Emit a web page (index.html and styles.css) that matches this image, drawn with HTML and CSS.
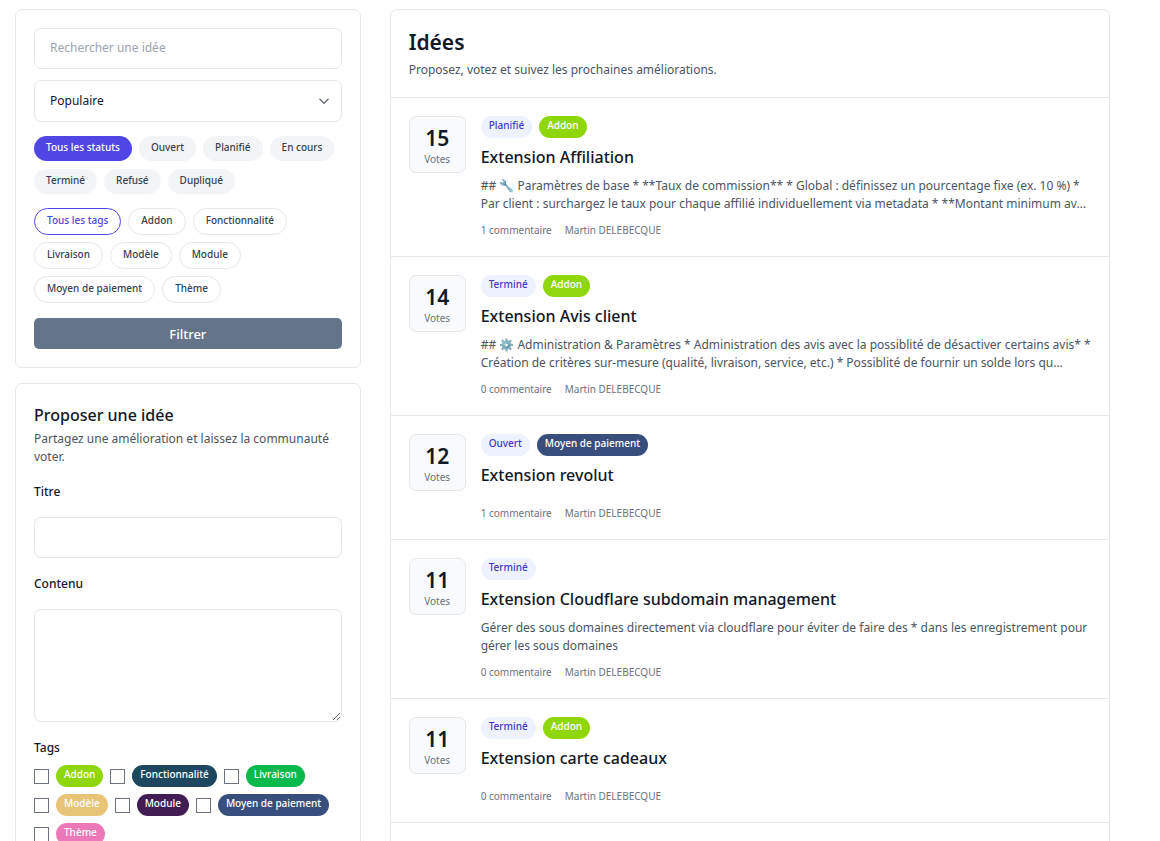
FILE: index.html
```html
<!DOCTYPE html>
<html lang="fr">
<head>
<meta charset="utf-8">
<meta name="viewport" content="width=device-width, initial-scale=1">
<title>Idées</title>
<link rel="stylesheet" href="styles.css">
</head>
<body>
<div class="page">
  <aside class="sidebar">
    <form class="card filters">
      <input class="field search" type="search" placeholder="Rechercher une idée" aria-label="Rechercher une idée">
      <div class="select-wrap">
        <select class="field select" aria-label="Trier">
          <option>Populaire</option>
        </select>
        <svg class="chevron" viewBox="0 0 20 20" aria-hidden="true"><path d="M5.5 8l4.500 4.500 4.500-4.500" fill="none" stroke="#6b7280" stroke-width="1.700" stroke-linecap="round" stroke-linejoin="round"/></svg>
      </div>
      <div class="pills statuses">
        <button type="button" class="pill status active">Tous les statuts</button>
        <button type="button" class="pill status">Ouvert</button>
        <button type="button" class="pill status">Planifié</button>
        <button type="button" class="pill status">En cours</button>
        <button type="button" class="pill status">Terminé</button>
        <button type="button" class="pill status">Refusé</button>
        <button type="button" class="pill status">Dupliqué</button>
      </div>
      <div class="pills">
        <button type="button" class="pill tag active">Tous les tags</button>
        <button type="button" class="pill tag">Addon</button>
        <button type="button" class="pill tag">Fonctionnalité</button>
        <button type="button" class="pill tag">Livraison</button>
        <button type="button" class="pill tag">Modèle</button>
        <button type="button" class="pill tag">Module</button>
        <button type="button" class="pill tag">Moyen de paiement</button>
        <button type="button" class="pill tag">Thème</button>
      </div>
      <button type="submit" class="submit">Filtrer</button>
    </form>

    <form class="card propose">
      <h2 class="heading">Proposer une idée</h2>
      <p class="lead">Partagez une amélioration et laissez la communauté voter.</p>
      <label class="label" for="title">Titre</label>
      <input class="field" id="title" type="text">
      <label class="label" for="content">Contenu</label>
      <textarea class="field area" id="content"></textarea>
      <fieldset class="choices">
        <legend class="legend">Tags</legend>
        <div class="choice-list">
          <label class="choice"><input class="check" type="checkbox"><span class="badge lime">Addon</span></label>
          <label class="choice"><input class="check" type="checkbox"><span class="badge teal">Fonctionnalité</span></label>
          <label class="choice"><input class="check" type="checkbox"><span class="badge green">Livraison</span></label>
          <label class="choice"><input class="check" type="checkbox"><span class="badge sand">Modèle</span></label>
          <label class="choice"><input class="check" type="checkbox"><span class="badge plum">Module</span></label>
          <label class="choice"><input class="check" type="checkbox"><span class="badge navy">Moyen de paiement</span></label>
          <label class="choice"><input class="check" type="checkbox"><span class="badge pink">Thème</span></label>
        </div>
      </fieldset>
    </form>
  </aside>

  <main class="card board">
    <header class="board-head">
      <h1 class="title">Idées</h1>
      <p class="lead">Proposez, votez et suivez les prochaines améliorations.</p>
    </header>
    <ul class="ideas">
      <li class="idea">
        <button type="button" class="votes"><span class="count">15</span><span class="unit">Votes</span></button>
        <div class="idea-body">
          <div class="badges"><span class="badge state">Planifié</span><span class="badge lime">Addon</span></div>
          <h3 class="heading">Extension Affiliation</h3>
          <p class="idea-text">## 🔧 Paramètres de base * **Taux de commission** * Global : définissez un pourcentage fixe (ex. 10 %) *<br>Par client : surchargez le taux pour chaque affilié individuellement via metadata * **Montant minimum av…</p>
          <div class="meta"><span>1 commentaire</span><span>Martin DELEBECQUE</span></div>
        </div>
      </li>
      <li class="idea">
        <button type="button" class="votes"><span class="count">14</span><span class="unit">Votes</span></button>
        <div class="idea-body">
          <div class="badges"><span class="badge state">Terminé</span><span class="badge lime">Addon</span></div>
          <h3 class="heading">Extension Avis client</h3>
          <p class="idea-text">## ⚙️ Administration &amp; Paramètres * Administration des avis avec la possiblité de désactiver certains avis* *<br>Création de critères sur-mesure (qualité, livraison, service, etc.) * Possiblité de fournir un solde lors qu...</p>
          <div class="meta"><span>0 commentaire</span><span>Martin DELEBECQUE</span></div>
        </div>
      </li>
      <li class="idea">
        <button type="button" class="votes"><span class="count">12</span><span class="unit">Votes</span></button>
        <div class="idea-body">
          <div class="badges"><span class="badge state">Ouvert</span><span class="badge navy">Moyen de paiement</span></div>
          <h3 class="heading">Extension revolut</h3>
          <p class="idea-text"></p>
          <div class="meta"><span>1 commentaire</span><span>Martin DELEBECQUE</span></div>
        </div>
      </li>
      <li class="idea">
        <button type="button" class="votes"><span class="count">11</span><span class="unit">Votes</span></button>
        <div class="idea-body">
          <div class="badges"><span class="badge state">Terminé</span></div>
          <h3 class="heading">Extension Cloudflare subdomain management</h3>
          <p class="idea-text">Gérer des sous domaines directement via cloudflare pour éviter de faire des * dans les enregistrement pour<br>gérer les sous domaines</p>
          <div class="meta"><span>0 commentaire</span><span>Martin DELEBECQUE</span></div>
        </div>
      </li>
      <li class="idea">
        <button type="button" class="votes"><span class="count">11</span><span class="unit">Votes</span></button>
        <div class="idea-body">
          <div class="badges"><span class="badge state">Terminé</span><span class="badge lime">Addon</span></div>
          <h3 class="heading">Extension carte cadeaux</h3>
          <p class="idea-text"></p>
          <div class="meta"><span>0 commentaire</span><span>Martin DELEBECQUE</span></div>
        </div>
      </li>
    </ul>
  </main>
</div>
</body>
</html>
```

FILE: styles.css
```css
*, *::before, *::after { box-sizing: border-box; }

body {
  margin: 0;
  background: #fff;
  color: #111827;
  font-family: "Noto Sans", "Open Sans", sans-serif;
  font-size: 12px;
  line-height: 18px;
}

h1, h2, h3, p, ul, fieldset { margin: 0; padding: 0; }
button, input, select, textarea { font: inherit; color: inherit; margin: 0; }
button { cursor: pointer; }

.page {
  display: grid;
  grid-template-columns: repeat(3, minmax(0, 1fr));
  gap: 29px;
  align-items: start;
  height: 100vh;
  overflow: hidden;
  padding: 9px 50px 0 15px;
}

.sidebar { display: flex; flex-direction: column; gap: 15px; }
.card { border: 1px solid #e5e7eb; border-radius: 7px; background: #fff; }

/* Filters */
.filters { display: flex; flex-direction: column; gap: 14px; padding: 18px; }
.field {
  display: block;
  width: 100%;
  height: 41px;
  padding: 0 15px;
  border: 1px solid #e5e7eb;
  border-radius: 7px;
  background: #fff;
  appearance: none;
}
.search { padding-bottom: 2px; }
.field::placeholder { color: #9ca3af; opacity: 1; }
.select-wrap { position: relative; margin-top: -3px; }
.select { height: 42px; }
.chevron {
  position: absolute;
  top: 12px;
  right: 8px;
  width: 20px;
  height: 18px;
  pointer-events: none;
}

.pills { display: flex; flex-wrap: wrap; gap: 7px; }
.statuses { row-gap: 8px; }
.pill { border: 0; border-radius: 14px; font-size: 10px; font-weight: 500; line-height: 15px; color: #374151; }
.status { padding: 4px 12px 6px; background: #f3f4f6; }
.status.active { background: #4f46e5; color: #fff; }
.tag { padding: 4px 12px 6px; border: 1px solid #e5e7eb; background: #fff; }
.tag.active { border-color: #4f46e5; color: #4f46e5; }

.submit {
  height: 31px;
  margin-top: 1px;
  border: 0;
  border-radius: 5px;
  background: #64748b;
  color: #fff;
  font-size: 13px;
  font-weight: 500;
}

/* Proposal form */
.propose { padding: 18px; }
.heading { font-size: 16px; font-weight: 500; line-height: 26px; }
.lead { padding-top: 2px; color: #4b5563; }
.label { display: block; margin: 17px 0 16px; font-weight: 500; }
.area { height: 113px; padding: 11px 15px; resize: vertical; }
.choices { min-width: 0; margin-top: 17px; border: 0; }
.legend { padding: 0; margin-bottom: 8px; font-weight: 500; }
.choice-list { display: flex; flex-wrap: wrap; gap: 7px; }
.choice { display: flex; align-items: center; gap: 7px; }
.check {
  appearance: none;
  width: 15px;
  height: 15px;
  border: 1px solid #6b7280;
  background: #fff;
}
.check:checked { background: #4f46e5; }

.badge {
  padding: 2px 8px 5px;
  border-radius: 11px;
  color: #fff;
  font-size: 10px;
  font-weight: 500;
  line-height: 15px;
}
.state { background: #eef2ff; color: #4338ca; }
.lime { background: #8fd60a; }
.teal { background: #1d475f; }
.green { background: #08b94e; }
.sand { background: #e8c477; }
.plum { background: #421d54; }
.navy { background: #384f7d; }
.pink { background: #ec77b9; }

/* Board */
.board { grid-column: span 2; }
.board-head { padding: 18px; border-bottom: 1px solid #e5e7eb; }
.board-head .lead { padding-top: 4px; }
.title { font-size: 21px; font-weight: 600; line-height: 29px; }
.ideas { list-style: none; padding-bottom: 29px; }
.idea { display: flex; align-items: flex-start; gap: 15px; padding: 18px; border-bottom: 1px solid #e5e7eb; }
.votes {
  display: flex;
  flex: none;
  flex-direction: column;
  align-items: center;
  width: 57px;
  padding: 7px 0 5px;
  border: 1px solid #e5e7eb;
  border-radius: 7px;
  background: #f9fafb;
}
.count { font-size: 21px; font-weight: 600; line-height: 28px; }
.unit { color: #6b7280; font-size: 10px; line-height: 15px; }
.idea-body { flex: 1; min-width: 0; }
.badges { display: flex; gap: 7px; margin-bottom: 6px; }
.idea-text { margin: 7px 0 10px; color: #4b5563; }
.idea-text:empty { min-height: 1px; }
.meta { display: flex; gap: 13px; color: #6b7280; font-size: 10px; line-height: 15px; }
```
